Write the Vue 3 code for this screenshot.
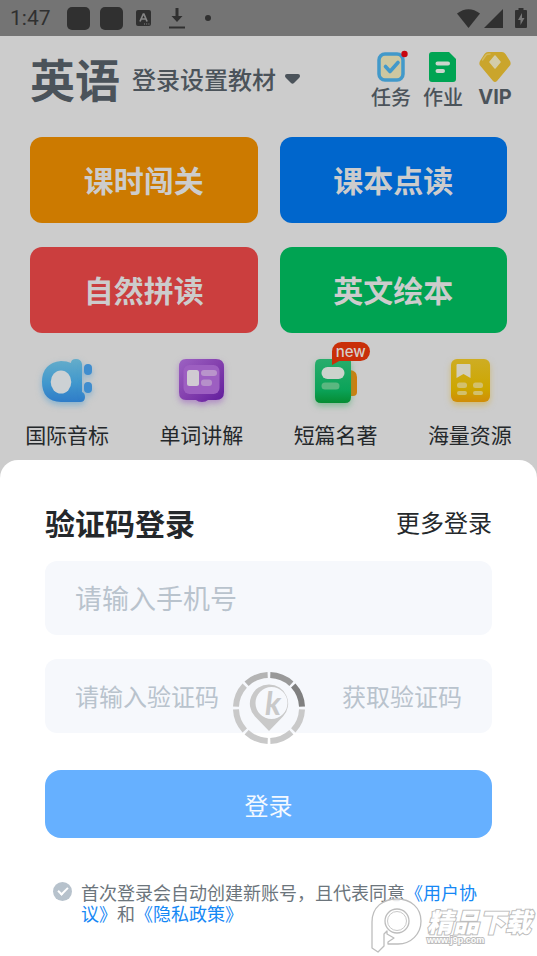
<script setup>
import { ref } from 'vue'

const phone = ref('')
const code = ref('')
const agreed = ref(true)

const courses = [
  { name: '课时闯关', tone: 'orange' },
  { name: '课本点读', tone: 'blue' },
  { name: '自然拼读', tone: 'red' },
  { name: '英文绘本', tone: 'green' },
]

const segments = [
  '#999999', '#808080', '#c9c9c9', '#c9c9c9',
  '#c9c9c9', '#c9c9c9', '#c6c6c6', '#b4b4b4',
]
</script>

<template>
  <div class="page">
    <div class="status">
      <div class="status-side">
        <span class="clock">1:47</span>
        <svg class="block" width="23" height="23" viewBox="0 0 23 23"><rect width="23" height="23" rx="5" fill="#303030" /></svg>
        <svg class="block" width="23" height="23" viewBox="0 0 23 23"><rect width="23" height="23" rx="5" fill="#303030" /></svg>
        <svg class="lang" width="15" height="16" viewBox="0 0 15 16">
          <rect width="15" height="16" rx="2" fill="#303030" />
          <path d="M4 11.5 7.3 4h.6l3.2 7.5M5.2 9h4.8" fill="none" stroke="#858585" stroke-width="1.700" />
          <path d="M8 14h1M10.200 14h1M12.400 14h1" stroke="#858585" stroke-width="1" />
        </svg>
        <svg class="download" width="16" height="21" viewBox="0 0 16 21">
          <path d="M6.500 0h3v8h4L8 14 2.500 8h4zM0 18.500h16v2H0z" fill="#303030" />
        </svg>
        <svg width="6" height="6" viewBox="0 0 6 6"><circle cx="3" cy="3" r="3" fill="#303030" /></svg>
      </div>
      <div class="status-side">
        <svg width="23" height="19" viewBox="0 0 23 19"><path d="M0 4.500Q11.500-4 23 4.500L11.500 19z" fill="#303030" /></svg>
        <svg class="signal" width="19" height="19" viewBox="0 0 19 19"><path d="M19 0v19H0z" fill="#303030" /></svg>
        <svg width="12" height="20" viewBox="0 0 12 20">
          <path d="M3.500 0h5v2H11q1 0 1 1v16q0 1-1 1H1q-1 0-1-1V3q0-1 1-1h2.500z" fill="#303030" />
          <path d="M7 5 3 12h2.500v5l4-7H7z" fill="#777" />
        </svg>
      </div>
    </div>

    <header class="top">
      <h1 class="subject">英语</h1>
      <button class="textbook" type="button">
        登录设置教材
        <svg width="15" height="10" viewBox="0 0 15 10"><path d="M2 0h11q2 0 2 2 0 1-1 2L9 9q-1.500 1.500-3 0L1 4Q0 3 0 2 0 0 2 0z" fill="#4b535a" /></svg>
      </button>
      <nav class="tools">
        <a class="tool" href="#">
          <svg width="32" height="32" viewBox="0 0 32 32">
            <rect x="4" y="3" width="24" height="26" rx="6" fill="#ccc7a1" stroke="#4299ca" stroke-width="3.500" />
            <path d="m10.500 15.500 4.500 5 8-9" fill="none" stroke="#4299ca" stroke-width="3.600" stroke-linecap="round" stroke-linejoin="round" />
            <circle cx="29.500" cy="3" r="3.200" fill="#c80610" />
          </svg>
          任务
        </a>
        <a class="tool" href="#">
          <svg width="32" height="32" viewBox="0 0 32 32">
            <path d="M5 1h17l7 7v20q0 3-3 3H5q-3 0-3-3V4q0-3 3-3z" fill="#00a453" />
            <path d="M10.500 12.500H21M10.500 20H16" stroke="#ccd5cd" stroke-width="4" stroke-linecap="round" />
          </svg>
          作业
        </a>
        <a class="tool" href="#">
          <svg width="32" height="32" viewBox="0 0 32 32">
            <path d="M9 1h14q2 0 3.500 2l4.500 7q1.500 3-.5 5L18 30q-2 2-4 0L1.500 15q-2-2-.5-5l4.500-7Q7 1 9 1z" fill="#caa52c" />
            <path d="M3.500 9 7 4q1-1 4-1" fill="none" stroke="#d2b961" stroke-width="1.500" stroke-linecap="round" />
            <path d="m16 5 5 6-5 6-5-6z" fill="#d3cca9" stroke="#d3cca9" stroke-width="1.500" stroke-linejoin="round" />
          </svg>
          <b>VIP</b>
        </a>
      </nav>
    </header>

    <main class="courses">
      <button v-for="c in courses" :key="c.name" type="button" class="course" :class="c.tone">{{ c.name }}</button>
    </main>

    <nav class="shortcuts">
      <a class="shortcut" href="#">
        <svg width="60" height="54" viewBox="0 0 60 54">
          <defs>
            <linearGradient id="sky" x2="0" y2="1"><stop stop-color="#65adca" /><stop offset=".55" stop-color="#4198cd" /><stop offset="1" stop-color="#2f7cc8" /></linearGradient>
          </defs>
          <path class="glow-blue" d="M24 4q6 0 10 2 0-4 5-4t6 5v28q3 1 3 5 0 5-5 5H24Q5 44 5 25 5 6 24 4z" fill="url(#sky)" />
          <ellipse cx="24" cy="25" rx="10.300" ry="11.500" fill="#ccd1d4" />
          <rect class="glow-blue" x="47" y="7" width="8" height="11" rx="4" fill="#408dce" />
          <rect class="glow-blue" x="47" y="25" width="8" height="11" rx="4" fill="#408dce" />
        </svg>
        国际音标
      </a>
      <a class="shortcut" href="#">
        <svg width="60" height="54" viewBox="0 0 60 54">
          <defs>
            <linearGradient id="plum" x2="1" y2="1"><stop stop-color="#9c62c2" /><stop offset=".5" stop-color="#8440ae" /><stop offset="1" stop-color="#601b9c" /></linearGradient>
          </defs>
          <path class="glow-purple" d="M15 2h30q8 0 8 8v25q0 8-8 8h-8q-2 2-6 2t-6-2H15q-7 0-7-8V10q0-8 7-8z" fill="url(#plum)" />
          <rect x="12.500" y="8" width="36" height="29" rx="6" fill="#9d5fc1" />
          <rect x="16" y="13" width="12" height="16" rx="2.500" fill="#d0cad2" />
          <rect x="30" y="13" width="16" height="6" rx="3" fill="#b994cb" />
          <rect x="30" y="22.500" width="11" height="6.500" rx="3" fill="#b690ca" />
        </svg>
        单词讲解
      </a>
      <a class="shortcut" href="#">
        <span class="badge">new</span>
        <svg width="60" height="54" viewBox="0 0 60 54">
          <defs>
            <linearGradient id="leaf" x2="0" y2="1"><stop stop-color="#28ad6c" /><stop offset=".7" stop-color="#0ba359" /><stop offset="1" stop-color="#058c32" /></linearGradient>
          </defs>
          <path d="M44 13q7 1 7 7v15q0 4-4 4h-3z" fill="#d37d0c" />
          <path class="glow-green" d="M14 2h28q3 0 3 3v35q0 6-6 6H15q-6 0-6-6V8q0-6 5-6z" fill="url(#leaf)" />
          <rect x="15.500" y="10" width="23" height="12" rx="6" fill="#ccd3cc" />
          <rect x="15.500" y="25.500" width="18" height="7" rx="3.500" fill="#5bb780" />
        </svg>
        短篇名著
      </a>
      <a class="shortcut" href="#">
        <svg width="60" height="54" viewBox="0 0 60 54">
          <defs>
            <linearGradient id="sun" x2="0" y2="1"><stop stop-color="#cead23" /><stop offset=".7" stop-color="#cda600" /><stop offset="1" stop-color="#d08c09" /></linearGradient>
          </defs>
          <rect class="glow-yellow" x="11" y="2" width="39" height="43" rx="6" fill="url(#sun)" />
          <path d="M17.500 7h12q1 0 1 1v13l-7-4-7 4V8q0-1 1-1z" fill="#d2cebd" />
          <g fill="#d2c06c">
            <rect x="17" y="25.500" width="10" height="5.500" rx="2.500" />
            <rect x="33" y="25.500" width="10" height="5.500" rx="2.500" />
            <rect x="17" y="34" width="10" height="4" rx="2" />
            <rect x="33" y="34" width="10" height="4" rx="2" />
          </g>
        </svg>
        海量资源
      </a>
    </nav>

    <form class="sheet" @submit.prevent>
      <div class="sheet-head">
        <h2 class="title">验证码登录</h2>
        <a class="more" href="#">更多登录</a>
      </div>
      <input v-model="phone" class="field phone" type="tel" placeholder="请输入手机号" aria-label="手机号" />
      <div class="field code">
        <input v-model="code" class="code-input" type="text" placeholder="请输入验证码" aria-label="验证码" />
        <button class="send" type="button">获取验证码</button>
        <svg class="spinner" width="74" height="74" viewBox="-37 -37 74 74">
          <path
            v-for="(color, i) in segments" :key="i"
            d="M1.300-33A33 33 0 0 1 22.400-24.300" :transform="`rotate(${i * 45})`"
            fill="none" :stroke="color" stroke-width="6"
          />
          <path fill-rule="evenodd" d="M0-23.500A19 19 0 0 1 14 8.500L0 23-14 8.500A19 19 0 0 1 0-23.500zM2.500-21A16 16 0 1 0 2.500 11 16 16 0 1 0 2.500-21z" fill="#c9c9c9" />
          <text x="4" y="7" text-anchor="middle" class="mark-k">k</text>
        </svg>
      </div>
      <button class="submit" type="submit">登录</button>
      <div class="terms">
        <input id="agree" v-model="agreed" class="tick" type="checkbox" />
        <p class="terms-text"><label for="agree">首次登录会自动创建新账号，且代表同意</label><a href="#">《用户协议》</a>和<a href="#">《隐私政策》</a></p>
      </div>
    </form>

    <div class="watermark">
      <svg width="52" height="56" viewBox="0 0 52 56">
        <path d="M1 50V24C1 9 12 1 26 1s24 9 24 22-10 23-23 23H17v-2l6-4-7-4v-3l-3 3v12L7 54z" fill="#fff" fill-opacity=".85" stroke="#bdbdbd" stroke-width="1.300" stroke-linejoin="round" />
        <circle cx="26" cy="23" r="12" fill="#fff" stroke="#bdbdbd" stroke-width="1.300" />
        <circle cx="26" cy="23" r="9.500" fill="none" stroke="#c8c8c8" />
      </svg>
      <div class="watermark-words">
        <span class="watermark-name">精品下载</span>
        <span class="watermark-site">www.j9p.com</span>
      </div>
    </div>
  </div>
</template>

<style>
body {
  margin: 0;
  background: #cccccc;
}
</style>

<style scoped>
.page {
  position: relative;
  display: flex;
  flex-direction: column;
  min-height: 100vh;
  background: #cccccc;
  color: #24282b;
  font-family: "Noto Sans CJK SC", sans-serif;
}
svg {
  display: block;
  flex: none;
  overflow: visible;
}
a {
  color: inherit;
  text-decoration: none;
}
button {
  padding: 0;
  border: 0;
  background: none;
  color: inherit;
  font: inherit;
  cursor: pointer;
}
input {
  min-width: 0;
  box-sizing: border-box;
  font-family: inherit;
}
input::placeholder {
  color: #b9c3cd;
  opacity: 1;
}

.status {
  display: flex;
  align-items: center;
  justify-content: space-between;
  height: 36px;
  padding: 0 10px;
  background: #747474;
}
.status-side {
  display: flex;
  align-items: center;
}
.clock {
  margin-right: 16px;
  color: #303030;
  font: 21px/24px Roboto, sans-serif;
}
.block {
  margin-right: 10px;
}
.lang {
  margin: 0 18px 0 3px;
}
.download {
  margin-right: 20px;
}
.signal {
  margin: 0 12px 0 4px;
}

.top {
  display: flex;
  align-items: center;
  box-sizing: border-box;
  height: 89px;
  padding: 0 16px 4px 30px;
  color: #4b535a;
}
.subject {
  margin: 0 12px 0 0;
  font-size: 45px;
  line-height: 56px;
  font-weight: 700;
}
.textbook {
  display: flex;
  align-items: center;
  gap: 9px;
  font-size: 24px;
  line-height: 32px;
  font-weight: 500;
}
.tools {
  display: flex;
  margin-left: auto;
}
.tool {
  display: flex;
  flex-direction: column;
  align-items: center;
  width: 52px;
  padding-top: 4px;
  font-size: 20px;
  line-height: 28px;
  font-weight: 500;
}
.tool b {
  font-family: Inter, sans-serif;
  font-weight: 700;
}

.courses {
  display: grid;
  grid-template-columns: 1fr 1fr;
  gap: 24px 22px;
  padding: 12px 30px 0;
}
.course {
  height: 86px;
  padding-bottom: 2px;
  border-radius: 12px;
  color: #cccccc;
  font-size: 30px;
  font-weight: 700;
}
.orange { background: #cc7a00; }
.blue { background: #0066cc; }
.red { background: #cb3e3e; }
.green { background: #00a352; }

.shortcuts {
  display: grid;
  grid-template-columns: repeat(4, 1fr);
  padding: 24px 0 10px;
}
.shortcut {
  position: relative;
  display: flex;
  flex-direction: column;
  align-items: center;
  gap: 8px;
  font-size: 21px;
  line-height: 31px;
}
.badge {
  position: absolute;
  z-index: 1;
  top: -15px;
  left: 50%;
  margin-left: -4px;
  padding: 0 4px;
  border-radius: 10px 10px 10px 0;
  background: #c92f09;
  color: #d6cecb;
  font: 500 15px/19px Inter, sans-serif;
}
.badge::after {
  content: "";
  position: absolute;
  left: 0;
  top: 18px;
  border-top: 5px solid #c92f09;
  border-right: 9px solid transparent;
}
.glow-blue { filter: drop-shadow(0 3px 3px #4b9bd188); }
.glow-purple { filter: drop-shadow(0 3px 3px #9450bb88); }
.glow-green { filter: drop-shadow(0 3px 3px #3dac6688); }
.glow-yellow { filter: drop-shadow(0 3px 3px #d3ad3088); }

.sheet {
  display: flex;
  flex: 1;
  flex-direction: column;
  padding: 42px 45px 20px;
  border-radius: 18px 18px 0 0;
  background: #ffffff;
}
.sheet-head {
  display: flex;
  align-items: center;
  justify-content: space-between;
  margin-bottom: 19px;
}
.title {
  margin: 0;
  font-size: 30px;
  line-height: 40px;
  font-weight: 700;
}
.more {
  font-size: 24px;
  line-height: 40px;
}
.field {
  box-sizing: border-box;
  height: 74px;
  margin-bottom: 24px;
  padding: 0 30px 2px;
  border: 0;
  border-radius: 12px;
  background: #f6f8fc;
}
.phone {
  font-size: 27px;
}
.code {
  position: relative;
  display: flex;
  align-items: center;
  justify-content: space-between;
  margin-bottom: 37px;
  color: #b9c3cd;
  font-size: 24px;
}
.code-input {
  flex: 1;
  padding: 0;
  border: 0;
  background: none;
  font-size: 24px;
}
.spinner {
  position: absolute;
  left: 50%;
  top: 50%;
  margin: -25px 0 0 -37px;
}
.mark-k {
  fill: #c9c9c9;
  font: italic 700 32px Lato, sans-serif;
}
.submit {
  height: 68px;
  border-radius: 16px;
  background: #66b0ff;
  color: #f4f9ff;
  font-size: 24px;
}
.terms {
  display: flex;
  align-items: flex-start;
  gap: 9px;
  margin-top: 44px;
  padding-left: 8px;
}
.tick {
  flex: none;
  display: grid;
  place-items: center;
  width: 19px;
  height: 19px;
  margin: 0;
  appearance: none;
  border-radius: 50%;
  background: #b7c2cc;
}
.tick:checked::after {
  content: "";
  width: 8px;
  height: 4px;
  margin-bottom: 3px;
  border: solid #ffffff;
  border-width: 0 0 2px 2px;
  transform: rotate(-45deg);
}
.terms-text {
  margin: 0;
  color: #6c757c;
  font-size: 18px;
  line-height: 21px;
}
.terms-text a {
  color: #1688f5;
}

.watermark {
  position: absolute;
  right: 6px;
  bottom: 2px;
  display: flex;
  align-items: center;
  gap: 4px;
  pointer-events: none;
}
.watermark-words {
  display: flex;
  flex-direction: column;
}
.watermark-name,
.watermark-site {
  color: #ffffff;
  paint-order: stroke fill;
  -webkit-text-stroke: 2px #bdbdbd;
}
.watermark-name {
  font-size: 26px;
  line-height: 28px;
  font-weight: 900;
  font-style: italic;
}
.watermark-site {
  font: 700 9px/10px "Liberation Sans", sans-serif;
}
</style>
